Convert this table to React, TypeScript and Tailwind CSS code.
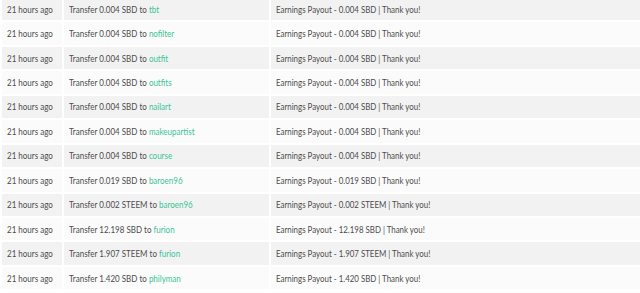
import React from "react";

const rows: [string, string, string][] = [
  ["0.004 SBD", "tbt", "0.004 SBD"],
  ["0.004 SBD", "nofilter", "0.004 SBD"],
  ["0.004 SBD", "outfit", "0.004 SBD"],
  ["0.004 SBD", "outfits", "0.004 SBD"],
  ["0.004 SBD", "nailart", "0.004 SBD"],
  ["0.004 SBD", "makeupartist", "0.004 SBD"],
  ["0.004 SBD", "course", "0.004 SBD"],
  ["0.019 SBD", "baroen96", "0.019 SBD"],
  ["0.002 STEEM", "baroen96", "0.002 STEEM"],
  ["12.198 SBD", "furion", "12.198 SBD"],
  ["1.907 STEEM", "furion", "1.907 STEEM"],
  ["1.420 SBD", "philyman", "1.420 SBD"],
];

export default function App() {
  return (
    <div
      className="w-[640px] h-[293px] overflow-hidden bg-white text-[10px] text-[#4d4d4d]"
      style={{ fontFamily: "Lato, 'Noto Sans', sans-serif" }}
    >
      <div className="-mt-[2px] pl-[2px] flex flex-col gap-y-[2px]">
        {rows.map(([amt, to, memo], i) => {
          const bg = i % 2 === 0 ? "bg-[#f2f2f2]" : "bg-[#fbfbfb]";
          return (
            <div key={i} className="flex gap-x-[2px] h-[22.45px]">
              <div className={`${bg} w-[60px] shrink-0 flex items-center pl-[5px] whitespace-nowrap`}>
                <span className="inline-block scale-x-[0.8] origin-left">21 hours ago</span>
              </div>
              <div className={`${bg} w-[205px] shrink-0 flex items-center pl-[5px] whitespace-nowrap`}>
                <span className="inline-block scale-x-[0.8] origin-left">
                  Transfer {amt} to <span className="text-[#3cc497]">{to}</span>
                </span>
              </div>
              <div className={`${bg} flex-1 flex items-center pl-[5px] whitespace-nowrap`}>
                <span className="inline-block scale-x-[0.79] origin-left">
                  Earnings Payout - {memo} | Thank you!
                </span>
              </div>
            </div>
          );
        })}
      </div>
    </div>
  );
}
